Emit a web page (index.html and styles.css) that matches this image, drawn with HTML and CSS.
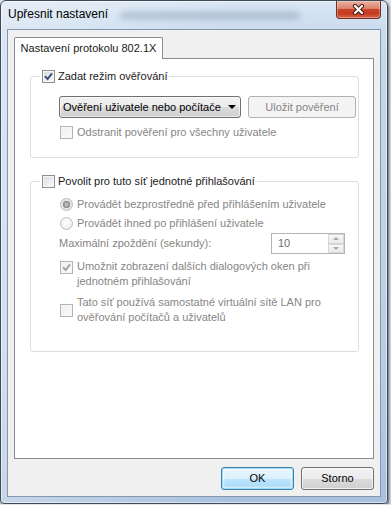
FILE: index.html
```html
<!DOCTYPE html>
<html lang="cs">
<head>
  <meta charset="UTF-8">
  <title>Upřesnit nastavení</title>
  <link rel="stylesheet" href="styles.css">
</head>
<body>

<div class="window">
  <div class="titlebar">
    <span class="title">Upřesnit nastavení</span>
    <span class="smudge"></span>
    <div class="close">
      <svg width="13" height="11" viewBox="0 0 13 11">
        <path d="M3 2 10 9 M10 2 3 9" stroke="#4a1c14" stroke-width="4.2" stroke-linecap="round" fill="none"/>
        <path d="M3 2 10 9 M10 2 3 9" stroke="#fff" stroke-width="2.2" stroke-linecap="round" fill="none"/>
      </svg>
    </div>
  </div>

  <div class="client">
    <div class="tabs">
      <div class="tab">Nastavení protokolu 802.1X</div>
    </div>

    <div class="panel">
      <!-- skupina 1 -->
      <fieldset class="group">
        <legend>
          <label class="check">
            <span class="box"><svg width="9" height="9" viewBox="0 0 9 9"><path d="M1 4.2 3.6 7 8 1.3" fill="none" stroke="#3a4f7e" stroke-width="2"/></svg></span>
            Zadat režim ověřování
          </label>
        </legend>
        <div class="group-body first">
          <div class="row">
            <div class="combo"><span>Ověření uživatele nebo počítače</span><span class="arrow"></span></div>
            <div class="btn disabled save">Uložit pověření</div>
          </div>
          <label class="check dim item gap8">
            <span class="box off"></span>
            Odstranit pověření pro všechny uživatele
          </label>
        </div>
      </fieldset>

      <!-- skupina 2 -->
      <fieldset class="group">
        <legend>
          <label class="check">
            <span class="box"></span>
            Povolit pro tuto síť jednotné přihlašování
          </label>
        </legend>
        <div class="group-body second">
          <label class="check dim item">
            <span class="radio on"></span>
            Provádět bezprostředně před přihlášením uživatele
          </label>
          <label class="check dim item gap4">
            <span class="radio"></span>
            Provádět ihned po přihlášení uživatele
          </label>
          <div class="spin-row dim">
            <span>Maximální zpoždění (sekundy):</span>
            <div class="spin">
              <span class="val">10</span>
              <span class="arrows">
                <span class="half"><span class="up"></span></span>
                <span class="half"><span class="down"></span></span>
              </span>
            </div>
          </div>
          <label class="check dim item top gap5">
            <span class="box off"><svg width="9" height="9" viewBox="0 0 9 9"><path d="M1 4.2 3.6 7 8 1.3" fill="none" stroke="#a3a3a3" stroke-width="2"/></svg></span>
            <span>Umožnit zobrazení dalších dialogových oken při<br>jednotném přihlašování</span>
          </label>
          <label class="check dim item gap6">
            <span class="box off"></span>
            <span>Tato síť používá samostatné virtuální sítě LAN pro<br>ověřování počítačů a uživatelů</span>
          </label>
        </div>
      </fieldset>
    </div>

    <div class="actions">
      <div class="btn default">OK</div>
      <div class="btn">Storno</div>
    </div>
  </div>
</div>

</body>
</html>
```

FILE: styles.css
```css
body {
  margin: 0;
  background: #dfe3e8;
  font: 11px/15px "Liberation Sans", Arial, sans-serif;
  color: #1a1a1a;
}

/* okno */
.window {
  box-sizing: border-box;
  width: 388px;
  border: 1px solid #3f4a58;
  border-radius: 6px 6px 4px 4px;
  padding: 0 6px 6px;
  background:
    linear-gradient(to right, rgba(255,255,255,.35), rgba(255,255,255,0) 60%),
    linear-gradient(#d9e6f4, #c5d8ec 40px, #b9cee5 70%, #a9c1de);
  box-shadow: inset 0 0 0 1px rgba(255,255,255,.55), 1px 2px 3px rgba(0,0,0,.6);
}

.titlebar {
  display: flex;
  align-items: flex-start;
  height: 28px;
}

.title {
  font-size: 12px;
  line-height: 16px;
  padding: 5px 0 0 1px;
  color: #000;
}

.smudge {
  width: 180px;
  height: 7px;
  margin: 11px 0 0 12px;
  background: rgba(70, 90, 120, .28);
  filter: blur(3px);
  border-radius: 4px;
}

.close {
  margin-left: auto;
  width: 45px;
  height: 18px;
  box-sizing: border-box;
  border: 1px solid #6f2f26;
  border-top: none;
  border-radius: 0 0 4px 4px;
  background: linear-gradient(#eab1a3, #dd8069 45%, #c7442b 50%, #c53a21 75%, #d86c4e);
  box-shadow: inset 0 0 0 1px rgba(255,255,255,.3);
  display: flex;
  align-items: center;
  justify-content: center;
}

/* klientská oblast */
.client {
  background: #f0f0f0;
  border: 1px solid #8497b0;
  padding: 7px 6px 6px;
}

.tabs {
  display: flex;
  position: relative;
  z-index: 1;
}

.tab {
  box-sizing: border-box;
  width: 149px;
  height: 22px;
  margin-bottom: -1px;
  border: 1px solid #898c95;
  border-bottom: none;
  border-radius: 2px 2px 0 0;
  background: #fff;
  text-align: center;
  line-height: 20px;
}

.panel {
  box-sizing: border-box;
  height: 401px;
  border: 1px solid #898c95;
  background: #fff;
  padding: 10px 14px 0 15px;
}

.group {
  margin: 0;
  padding: 0 2px 16px 9px;
  border: 1px solid #d5dfe5;
  border-radius: 3px;
  min-width: 0;
}

.group + .group {
  margin-top: 16px;
}

.group legend {
  padding: 0 2px;
}

.group legend .check {
  gap: 3px;
  line-height: 14px;
}

.group-body {
  padding-left: 19px;
}

.group-body.first { padding-top: 13px; padding-bottom: 1px; }
.group-body.second { padding-top: 9px; padding-bottom: 10px; }

.row {
  display: flex;
}

.check {
  display: flex;
  align-items: center;
  gap: 4px;
}

.check.top {
  align-items: flex-start;
}

.check.top .box {
  margin-top: 2px;
}

.item { margin-left: 1px; }
.gap4 { margin-top: 4px; }
.gap5 { margin-top: 5px; }
.gap6 { margin-top: 6px; }
.gap8 { margin-top: 7px; }

.dim { color: #868686; }

/* zaškrtávací políčko */
.box {
  box-sizing: border-box;
  flex: none;
  width: 13px;
  height: 13px;
  border: 1px solid #8e8f8f;
  background: linear-gradient(135deg, #d6d9dd, #fdfdfd);
  box-shadow: inset 0 0 0 1px #f6f6f6;
  display: grid;
  place-items: center;
}

.box.off {
  border-color: #b4b4b4;
  background: linear-gradient(135deg, #eeeeee, #fcfcfc);
}

.box svg { display: block; }

.radio {
  box-sizing: border-box;
  flex: none;
  width: 13px;
  height: 13px;
  border-radius: 50%;
  border: 1px solid #bababa;
  background: radial-gradient(circle at 45% 40%, #fff, #e9e9e9);
}

.radio.on {
  background: radial-gradient(circle at 50% 50%, #d2d2d2 0, #a2a2a2 2px, #8e8e8e 3.4px, #e2e2e2 4px, #f7f7f7 100%);
}

/* rozbalovací seznam */
.combo {
  display: flex;
  align-items: center;
  box-sizing: border-box;
  width: 182px;
  height: 22px;
  border: 1px solid #707070;
  border-radius: 3px;
  padding-left: 3px;
  background: linear-gradient(#f2f2f2, #ebebeb 50%, #dddddd 50%, #cfcfcf);
  box-shadow: inset 0 0 0 1px rgba(255,255,255,.6);
  color: #000;
}

.combo .arrow {
  margin-left: auto;
  margin-right: 4px;
  border-left: 4px solid transparent;
  border-right: 4px solid transparent;
  border-top: 4px solid #000;
}

.btn {
  box-sizing: border-box;
  width: 73px;
  height: 23px;
  border: 1px solid #707070;
  border-radius: 3px;
  display: flex;
  align-items: center;
  justify-content: center;
  background: linear-gradient(#f2f2f2, #ebebeb 50%, #dddddd 50%, #cfcfcf);
  box-shadow: inset 0 0 0 1px rgba(255,255,255,.7);
  color: #000;
}

.btn.disabled {
  border-color: #adb2b5;
  background: #f4f4f4;
  box-shadow: none;
  color: #868686;
}

.btn.save {
  width: 108px;
  height: 22px;
  margin-left: 7px;
}

.btn.default {
  border-color: #3c7fb1;
  background: linear-gradient(#eaf6fd, #d9f0fc 50%, #bee6fd 50%, #a7d9f5);
  box-shadow: inset 0 0 0 1px #9fdcf7, inset 0 0 2px 2px rgba(255,255,255,.6);
}

/* číselník */
.spin-row {
  display: flex;
  align-items: center;
  height: 21px;
  margin-top: 2px;
}

.spin {
  margin-left: auto;
  margin-right: 11px;
  box-sizing: border-box;
  width: 74px;
  height: 21px;
  border: 1px solid #b5b5b5;
  background: #fff;
  display: flex;
}

.spin .val {
  flex: 1;
  padding-left: 6px;
  line-height: 19px;
  color: #6d6d6d;
}

.spin .arrows {
  width: 16px;
  display: flex;
  flex-direction: column;
}

.spin .half {
  flex: 1;
  box-sizing: border-box;
  border: 1px solid #d6d6d6;
  background: linear-gradient(#f7f7f7, #e9e9e9);
  display: grid;
  place-items: center;
}

.spin .up,
.spin .down {
  border-left: 3px solid transparent;
  border-right: 3px solid transparent;
}

.spin .up { border-bottom: 3px solid #a8a8a8; }
.spin .down { border-top: 3px solid #a8a8a8; }

.actions {
  display: flex;
  justify-content: flex-end;
  gap: 7px;
  margin-top: 8px;
}
```
